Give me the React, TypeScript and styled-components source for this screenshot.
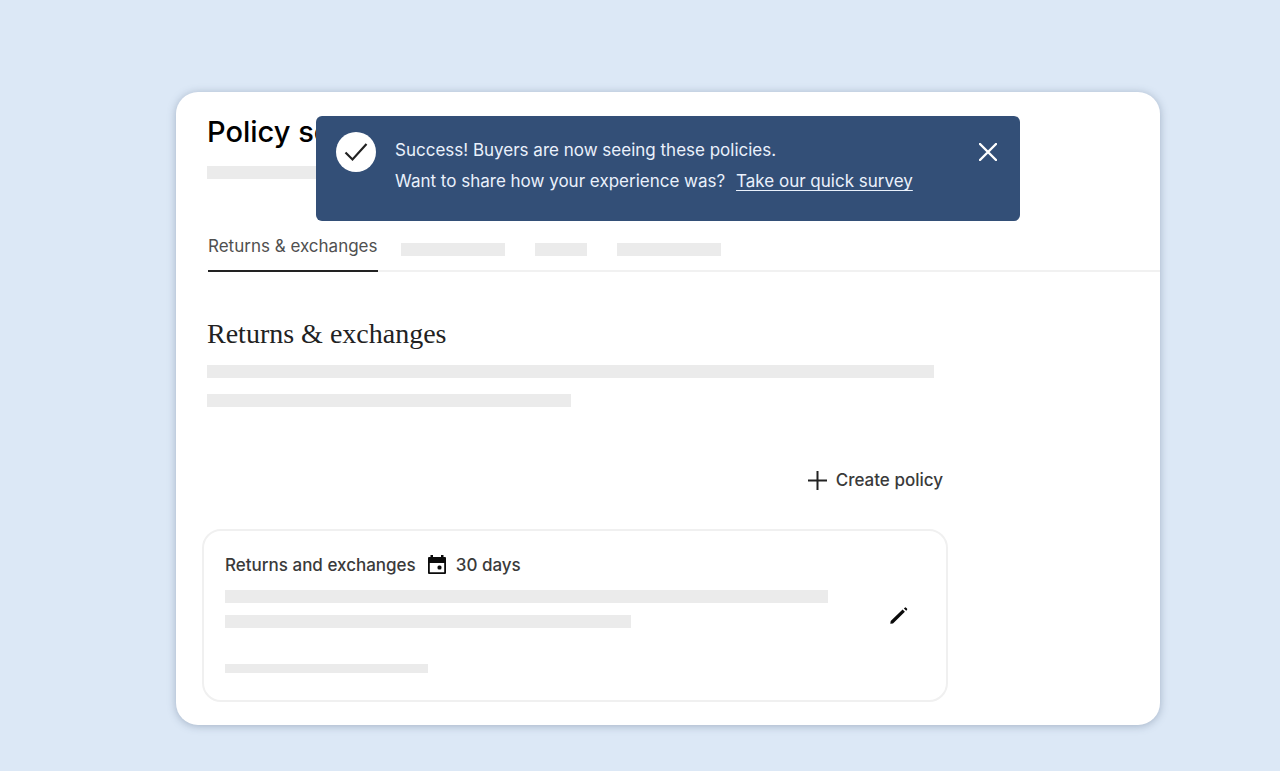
import React from "react";
import styled, { createGlobalStyle } from "styled-components";

const GlobalStyle = createGlobalStyle`
  *, *::before, *::after { box-sizing: border-box; }
  body {
    margin: 0;
    background: #dce8f6;
    color: #222;
    font-family: Inter, "Liberation Sans", sans-serif;
  }
  h1, h2, h3, p { margin: 0; }
  button { border: 0; padding: 0; background: none; font: inherit; color: inherit; cursor: pointer; }
  svg { display: block; }
`;

const Page = styled.div`
  min-height: 100vh;
  padding: 92px 120px 46px 176px;
`;

const Panel = styled.main`
  position: relative;
  padding: 24px 0 23px;
  border-radius: 22px;
  background: #fff;
  box-shadow: 0 1px 8px rgba(60, 80, 110, 0.36);
`;

const Header = styled.header`
  padding: 0 31px;
`;

const Title = styled.h1`
  margin-bottom: 18px;
  color: #000;
  font-size: 29px;
  line-height: 32px;
  font-weight: 500;
`;

const Bar = styled.div<{ $width: number; $thin?: boolean }>`
  width: ${(p) => p.$width}px;
  max-width: 100%;
  height: ${(p) => (p.$thin ? 9 : 13)}px;
  background: #ebebeb;
`;

const Tabs = styled.nav`
  display: flex;
  gap: 30px;
  margin: 55px 0 0 32px;
  box-shadow: inset 0 -2px #f1f1f1;
`;

const Tab = styled.button`
  padding-bottom: 12px;
  margin-right: -7px;
  border-bottom: 2px solid #222;
  color: #505050;
  font-size: 17px;
  line-height: 24px;
`;

const TabPlaceholder = styled(Bar)`
  margin-top: 9px;
`;

const Intro = styled.section`
  padding: 46px 31px 0;
`;

const SectionTitle = styled.h2`
  margin-bottom: 15px;
  font-family: "Liberation Serif", serif;
  font-size: 28px;
  line-height: 32px;
  font-weight: 400;
`;

const Lines = styled.div<{ $gap: number }>`
  display: flex;
  flex-direction: column;
  gap: ${(p) => p.$gap}px;
`;

const Policies = styled.section`
  max-width: 772px;
  padding: 61px 0 0 26px;
`;

const Actions = styled.div`
  display: flex;
  justify-content: flex-end;
  margin-bottom: 37px;
  padding-right: 5px;
`;

const CreateButton = styled.button`
  display: flex;
  align-items: center;
  gap: 9px;
  color: #3a3a3a;
  font-size: 17px;
  line-height: 24px;
  font-weight: 500;
`;

const PolicyCard = styled.article`
  display: flex;
  align-items: center;
  justify-content: space-between;
  padding: 22px 38px 22px 21px;
  border: 2px solid #f0f0f0;
  border-radius: 19px;
`;

const PolicyBody = styled.div`
  flex: 1;
  min-width: 0;
`;

const PolicyHeading = styled.div`
  display: flex;
  align-items: center;
  margin-bottom: 13px;
  color: #3a3a3a;
  font-size: 17px;
  line-height: 24px;
`;

const PolicyName = styled.h3`
  margin-right: 12px;
  font-size: inherit;
  font-weight: 500;
`;

const Window = styled.span`
  display: flex;
  align-items: center;
  gap: 10px;
  font-weight: 500;
`;

const Footnote = styled.div`
  padding: 36px 0 5px;
`;

const Toast = styled.div`
  position: absolute;
  top: 24px;
  left: 140px;
  right: 140px;
  display: flex;
  align-items: flex-start;
  padding: 16px 23px 24px 20px;
  border-radius: 6px;
  background: #334f77;
  color: #eaf1fc;
`;

const Message = styled.div`
  flex: 1;
  padding: 3px 0 0 19px;
  font-size: 17px;
  line-height: 31px;
`;

const SurveyLink = styled.a`
  margin-left: 6px;
  color: inherit;
  text-decoration: underline;
  text-decoration-thickness: 1px;
  text-underline-offset: 3px;
  text-decoration-skip-ink: none;
`;

const CloseButton = styled.button`
  margin-top: 11px;
  color: #fff;
`;

const CheckIcon = () => (
  <svg width="40" height="40" viewBox="0 0 40 40" aria-hidden="true">
    <circle cx="20" cy="20" r="20" fill="#fff" />
    <path d="M9.500 20.500l7 7L30.500 12" fill="none" stroke="#222" strokeWidth="2.200" />
  </svg>
);

const CloseIcon = () => (
  <svg width="18" height="18" viewBox="0 0 18 18" aria-hidden="true">
    <path d="M1 1l16 16M17 1L1 17" stroke="currentColor" strokeWidth="2.400" strokeLinecap="round" />
  </svg>
);

const PlusIcon = () => (
  <svg width="20" height="20" viewBox="0 0 20 20" aria-hidden="true">
    <path d="M10.500 1v19M1 10.500h19" stroke="#222" strokeWidth="2" />
  </svg>
);

const CalendarIcon = () => (
  <svg width="18" height="20" viewBox="0 0 18 20" aria-hidden="true">
    <path
      fill="#0b0b0b"
      fillRule="evenodd"
      d="M2.500 0h2.500v2h8V0h2.500v2H17a1 1 0 0 1 1 1v15a1 1 0 0 1-1 1H1a1 1 0 0 1-1-1V3a1 1 0 0 1 1-1h1.500zM1.800 8v9.200h14.400V8z"
    />
    <rect x="9.500" y="10.500" width="4" height="4" rx="1.500" fill="#0b0b0b" />
  </svg>
);

const PencilIcon = () => (
  <svg width="18" height="18" viewBox="0 0 18 18" aria-hidden="true">
    <path
      d="M.3 16.700l.4-2.700L12.600 2.400l2.300 2.300L3 16.400zM13.900 1.500l.8-.8a1 1 0 0 1 1.400 0l.9.900a1 1 0 0 1 0 1.300l-.8.800z"
      fill="#0b0b0b"
    />
  </svg>
);

export default function App() {
  return (
    <>
      <GlobalStyle />
      <Page>
        <Panel>
          <Header>
            <Title>Policy settings</Title>
            <Bar $width={364} />
          </Header>

          <Tabs aria-label="Policy types">
            <Tab type="button" aria-current="page">Returns &amp; exchanges</Tab>
            <TabPlaceholder $width={104} />
            <TabPlaceholder $width={52} />
            <TabPlaceholder $width={104} />
          </Tabs>

          <Intro>
            <SectionTitle>Returns &amp; exchanges</SectionTitle>
            <Lines $gap={16}>
              <Bar $width={727} />
              <Bar $width={364} />
            </Lines>
          </Intro>

          <Policies>
            <Actions>
              <CreateButton type="button">
                <PlusIcon />
                Create policy
              </CreateButton>
            </Actions>
            <PolicyCard>
              <PolicyBody>
                <PolicyHeading>
                  <PolicyName>Returns and exchanges</PolicyName>
                  <Window>
                    <CalendarIcon />
                    30 days
                  </Window>
                </PolicyHeading>
                <Lines $gap={12}>
                  <Bar $width={603} />
                  <Bar $width={406} />
                </Lines>
                <Footnote>
                  <Bar $width={203} $thin />
                </Footnote>
              </PolicyBody>
              <button type="button" aria-label="Edit policy">
                <PencilIcon />
              </button>
            </PolicyCard>
          </Policies>

          <Toast role="status">
            <CheckIcon />
            <Message>
              <p>Success! Buyers are now seeing these policies.</p>
              <p>
                Want to share how your experience was? <SurveyLink href="#survey">Take our quick survey</SurveyLink>
              </p>
            </Message>
            <CloseButton type="button" aria-label="Dismiss">
              <CloseIcon />
            </CloseButton>
          </Toast>
        </Panel>
      </Page>
    </>
  );
}
